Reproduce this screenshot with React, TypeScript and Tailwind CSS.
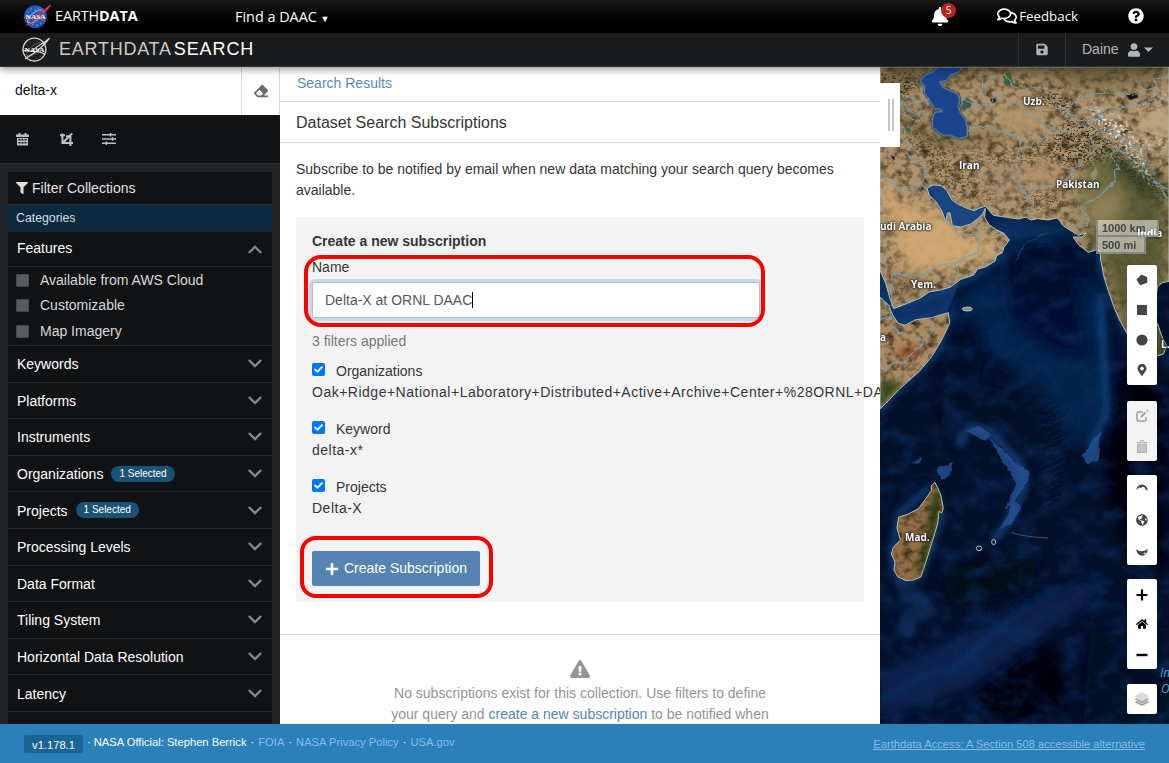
import React from 'react';
import {
  FaBell, FaRegComments, FaQuestionCircle, FaSave, FaUser, FaEraser,
  FaFilter, FaPlus, FaHome, FaExclamationTriangle, FaMapMarkerAlt, FaGlobeAmericas, FaCheck,
} from 'react-icons/fa';

const ARIAL = "font-['Liberation_Sans',Arial,sans-serif]";
const OPEN = "font-['Open_Sans',sans-serif]";

function Meatball({ mono }: { mono?: boolean }) {
  const line = mono ? '#e4e4e4' : '#e5343d';
  return (
    <svg width="28" height="26" viewBox="0 0 28 26">
      <circle cx="12.4" cy="12.6" r="11.4" fill={mono ? '#1b1c1e' : '#1d59b5'} stroke={mono ? '#d8d8d8' : 'none'} strokeWidth="1.3" />
      {[[8, 5], [15, 4], [18, 19], [6, 18], [10, 20], [5, 8], [20, 16], [12, 6], [14, 21]].map(([x, y]) => (
        <circle key={`${x}-${y}`} cx={x} cy={y} r=".5" fill={mono ? '#777' : '#fff'} />
      ))}
      <ellipse cx="12.4" cy="12.5" rx="9.6" ry="3.9" transform="rotate(-38 12.4 12.5)" fill="none" stroke={mono ? '#77787a' : '#dbe5f4'} strokeWidth=".65" />
      <path d="M3 21.8C10 17.7 20 12 27.5 1.1C20 8 14 8.5 10.2 14.4M.6 13.3C6 14.5 17 13.2 22.7 17.2" fill="none" stroke={line} strokeWidth="1.15" />
      <text x="2.6" y="15.2" textLength="20" lengthAdjust="spacingAndGlyphs" fill="#fff" fontSize="7" fontWeight="bold" fontFamily="Liberation Serif, serif">NASA</text>
    </svg>
  );
}

function Chevron({ up }: { up?: boolean }) {
  return (
    <svg width="14" height="9" viewBox="0 0 14 9" fill="none" stroke="#858687" strokeWidth="2.3" strokeLinecap="round" strokeLinejoin="miter">
      <path d={up ? 'M1.5 7.3L7 1.8L12.5 7.3' : 'M1.5 1.6L7 7.1L12.5 1.6'} />
    </svg>
  );
}

const facets: { name: string; selected?: boolean }[] = [
  { name: 'Keywords' }, { name: 'Platforms' }, { name: 'Instruments' },
  { name: 'Organizations', selected: true }, { name: 'Projects', selected: true },
  { name: 'Processing Levels' }, { name: 'Data Format' }, { name: 'Tiling System' },
  { name: 'Horizontal Data Resolution' }, { name: 'Latency' },
];

function Header() {
  return (
    <header className="relative z-20 shrink-0 shadow-[0_2px_8px_rgba(0,0,0,0.45)]">
      <div className={`flex h-[33px] items-center bg-gradient-to-b from-[#1a1a1a] to-black text-white ${OPEN}`}>
        <div className="flex w-[235px] items-center pl-[23px]">
          <Meatball />
          <span className="-mt-px ml-1 text-[14.4px] leading-[20px] tracking-[-0.1px]">EARTH<b>DATA</b></span>
        </div>
        <span className="text-[14.4px]">Find a DAAC <span className="text-[9px]">▼</span></span>
        <div className="ml-auto flex items-center pr-[25px]">
          <div className="relative mr-[48px] h-[20px] w-[18px]">
            <FaBell className="h-[19px] w-[18px]" />
            <span className="absolute -top-[4px] left-[10px] flex h-[15px] w-[15px] items-center justify-center rounded-full bg-[#b9241c] text-[10px]">5</span>
          </div>
          <FaRegComments className="-mt-[2px] h-[18px] w-[20px]" />
          <span className="ml-[2px] mr-[50px] text-[13.3px]">Feedback</span>
          <FaQuestionCircle className="-mt-[2px] h-4 w-4" />
        </div>
      </div>
      <div className="flex h-[34px] items-center border-b border-[#2f3032] bg-[#1a1b1d]">
        <div className="flex items-center pl-[22px] text-[18px] leading-none">
          <Meatball mono />
          <span className="-mt-[2px] ml-[9px] tracking-[0.75px] text-[#c9caca]">EARTHDATA</span>
          <span className="-mt-[2px] ml-[2px] tracking-[0.9px] text-white">SEARCH</span>
        </div>
        <div className="ml-auto flex h-full text-[#b4b5b6]">
          <div className="flex w-[47px] items-center justify-center border-l border-[#303133] pr-px"><FaSave className="h-[13px] w-[12px]" /></div>
          <div className="flex w-[104px] items-center border-l border-[#303133] pl-4 text-[14px]">
            Daine<FaUser className="ml-[9px] h-[14px] w-[12px]" />
            <svg className="ml-[4px]" width="9" height="5"><path d="M0 .5H9L4.5 5Z" fill="currentColor" /></svg>
          </div>
        </div>
      </div>
    </header>
  );
}

function Sidebar() {
  return (
    <aside className="flex w-[280px] shrink-0 flex-col overflow-hidden bg-[#222325]">
      <div className="flex h-12 shrink-0 bg-white text-[14px] text-[#111]">
        <div className="w-[241px] pl-[15px] pt-[13px] leading-[20px]">delta-x</div>
        <div className="flex flex-1 items-center justify-center border-x border-[#d8d9da] text-[#6b6c6e]"><FaEraser className="h-[14px] w-[14px]" /></div>
      </div>
      <div className="flex h-[49px] shrink-0 items-center border-b border-[#303133] bg-[#111214] pl-4 text-[#bfc0c1]">
        <svg width="13" height="13" viewBox="0 0 13 13"><path fill="currentColor" fillRule="evenodd" d="M2.5 0h2v1.5h4V0h2v1.5H13V4H0V1.5h2.5zM1 5h11v7.5H1zM2.5 6v1.6h2V6zm3 0v1.6h2V6zm3 0v1.6h2V6zM2.5 9v1.6h2V9zm3 0v1.6h2V9zm3 0v1.6h2V9z" /></svg>
        <svg className="ml-[31px]" width="13" height="13" viewBox="0 0 13 13" fill="none" stroke="currentColor" strokeWidth="2"><path d="M0 2.2h5M2.4 .5v9.5H13M10.4 13V3.2H6M3 9.5L12.3 .4" /></svg>
        <svg className="ml-[29px]" width="14" height="12" viewBox="0 0 14 12" stroke="currentColor" strokeWidth="1.4"><path d="M0 1.7h14M0 6h14M0 10.3h14M8.5 0v3.4M10.5 4.3v3.4M4.3 8.6V12" /></svg>
      </div>
      <div className="mx-2 mt-2 flex flex-col bg-[#111214]">
        <div className="flex h-[33px] items-center gap-1 border-b border-[#303133] pl-2 text-[14px] text-[#e1e1e1]">
          <FaFilter className="h-3 w-3" />Filter Collections
        </div>
        <div className="flex h-[27px] items-center border-b border-[#222426] bg-[#0b2a3f] pl-2 text-[12.3px] text-[#d9dde0]">Categories</div>
        <div className="flex h-[35px] items-center justify-between border-b border-[#242527] pl-[9px] pr-[10px] text-[14px] text-white"><span className="-mt-px">Features</span><Chevron up /></div>
        <div className="h-[79px] border-b border-[#242527] pl-2 pt-[1px] text-[14px] text-[#d8d9d9]">
          {['Available from AWS Cloud', 'Customizable', 'Map Imagery'].map((t) => (
            <div key={t} className="flex h-[25.3px] items-center"><span className="mr-[11px] h-[13px] w-[13px] rounded-[1px] border border-[#48494a] bg-[#5a5b5c]" />{t}</div>
          ))}
        </div>
        {facets.map((f) => (
          <div key={f.name} className="flex h-[36.6px] items-center border-b border-[#242527] pl-[9px] pr-[10px] text-[14px] text-white">
            <span className="mt-px leading-[20px]">{f.name}</span>
            {f.selected && <span className="ml-2 flex h-4 items-center rounded-full bg-[#1b5378] px-2 pb-px text-[10px]">1 Selected</span>}
            <span className="ml-auto"><Chevron /></span>
          </div>
        ))}
        <div className="h-10" />
      </div>
    </aside>
  );
}

function FilterItem({ title, value, h }: { title: string; value: string; h: string }) {
  return (
    <div className={h}>
      <div className="flex h-[21px] items-center">
        <span className="-mt-[5px] mr-[11px] flex h-[13px] w-[13px] items-center justify-center rounded-[2px] bg-[#0075ff]"><FaCheck className="h-[9px] w-[9px] text-white" /></span>{title}
      </div>
      <div className="whitespace-nowrap leading-[21px] tracking-[0.5px]">{value}</div>
    </div>
  );
}

function Panel() {
  return (
    <main className="relative flex w-[600px] shrink-0 flex-col overflow-hidden bg-white text-[14px] text-[#333537]">
      <div className="h-[35px] shrink-0 border-b border-[#dcdddd] pl-[17px] pt-[6px] leading-[20px] text-[#5889b8]">Search Results</div>
      <div className="flex h-[41px] shrink-0 items-center border-b border-[#dcdddd] pl-4 pt-[2px] text-[16px]">Dataset Search Subscriptions</div>
      <p className="h-[74px] shrink-0 px-4 pt-[16px] leading-[21px]">Subscribe to be notified by email when new data matching your search query becomes available.</p>
      <section className="mx-4 h-[385px] shrink-0 rounded-[2px] bg-[#f3f3f3] px-4 pt-[14px]">
        <div className="relative">
          <h2 className="font-bold leading-[21px]">Create a new subscription</h2>
          <div className="mt-[5px] h-[20px] leading-[20px]">Name</div>
          <div className="mt-[5px] flex h-[36px] w-[448px] items-center rounded-[3px] border border-[#a5bfd7] bg-white pl-3 text-[#55585c] shadow-[0_0_0_3px_#cbd6e1]">
            Delta-X at ORNL DAAC<span className="h-4 w-px bg-black" />
          </div>
          <div className="absolute -left-2 top-[24px] h-[72px] w-[461px] rounded-[17px] border-4 border-[#fb0000]" />
        </div>
        <div className="mb-[9px] mt-[13px] leading-[21px] text-[#777]">3 filters applied</div>
        <FilterItem h="h-[58px]" title="Organizations" value="Oak+Ridge+National+Laboratory+Distributed+Active+Archive+Center+%28ORNL+DAAC%29" />
        <FilterItem h="h-[58px]" title="Keyword" value="delta-x*" />
        <FilterItem h="h-[58px]" title="Projects" value="Delta-X" />
        <div className="relative mt-[16px] w-[168px]">
          <button className="flex h-[35px] w-[168px] items-center rounded-[2px] bg-[#5584b3] pl-[13px] text-white"><FaPlus className="mr-[5px] mt-px h-[14px] w-[14px]" />Create Subscription</button>
          <div className="absolute -left-3 -top-[15px] h-[62px] w-[193px] rounded-[16px] border-4 border-[#fb0000]" />
        </div>
      </section>
      <div className="mt-8 flex flex-col items-center border-t border-[#dcdddd] pt-[25px] text-center leading-[21px] text-[#939495]">
        <FaExclamationTriangle className="h-[18px] w-5" />
        <p className="mt-[5px] w-[390px]">No subscriptions exist for this collection. Use filters to define<br />your query and <span className="text-[#5584b5]">create a new subscription</span> to be notified when</p>
      </div>
    </main>
  );
}

const ASIA = 'M30 21H897V664L877 668L862 680L855 740L835 800L820 855L795 862L780 840L770 818L748 779L731 739L715 692L702 650L692 600L690 573L677 570L655 577L627 556L609 531L636 531L648 519L625 526L604 513L578 496L570 483L560 474L535 480L502 476L484 480L468 471L445 477L410 472L370 466L354 448L347 438L327 445L313 452L290 445L263 432L244 418L230 391L213 377L190 375L171 384L178 405L198 425L217 455L227 487L232 459L240 458L247 497L272 501L302 492L321 478L338 462L346 445L344 472L357 494L379 509L402 520L418 540L402 562L397 578L380 587L375 603L348 620L322 628L311 645L272 658L242 681L212 690L178 696L151 714L112 730L71 746L62 722L47 670L30 631Z';
const AFRICA = 'M30 712L56 735L68 765L84 789L105 796L137 779L185 773L235 758L239 790L214 842L185 890L148 934L112 966L85 990L55 1022L30 1047Z';
const CASPIAN = 'M149 64L165 45L187 36L205 21H278L267 36L241 46L229 63L210 65L217 81L238 91L265 102L269 122L265 138L271 159L286 177L292 202L291 230L266 236L240 226L218 226L188 203L186 183L191 161L202 155L217 154L211 148L194 147L181 125L162 98L164 77Z';
const MADAGASCAR = 'M194 1267L203 1282L213 1308L220 1345L215 1359L207 1354L203 1391L187 1444L168 1505L152 1551L130 1560L108 1562L83 1550L72 1530L75 1506L64 1482L70 1462L91 1440L81 1404L86 1371L113 1363L145 1346L166 1318L184 1292L184 1278Z';
const BORDERS = [
  'M30 345L95 390L137 391L155 368L173 386', 'M90 190L106 210L100 235L126 255L112 281L131 303L161 319L165 350L156 370L171 384',
  'M90 101L125 116L143 125L178 116M90 125L118 149L101 157L135 185L155 177L145 160L168 151M92 110L110 140L137 170',
  'M292 218L318 200L358 199L391 211L437 228L451 248L449 263L442 286L442 321L451 350L445 381L491 430L489 445L461 459',
  'M449 262L480 263L498 239L529 234L532 220L559 212L603 217L627 198L658 205L668 219L663 240L680 263L663 282L640 280L632 316L611 325L603 353L551 376L484 386L445 381',
  'M338 131V57L402 42L426 77L465 84L515 85L540 103L560 145L594 151L588 169L620 165L620 180L655 184L675 175',
  'M272 134L282 119L321 138L339 133L363 135L376 108L400 109L426 130L449 128L465 154L500 180L540 200L570 212',
  'M594 151L620 120L672 102L721 98L748 105L801 102L842 83L866 88L852 60L897 47M621 145L655 156L693 142L700 150L680 180L710 160L735 150L770 140L845 123L897 110',
  'M668 219L700 212L740 221L760 240L778 240L790 253L802 265L790 276L758 278L744 267L721 281L748 326L733 334L736 364L694 402L672 420L626 436L638 456L655 466L652 495L631 502L590 492',
  'M790 253L829 297L816 324L855 367L897 390M855 367L858 380L875 385L884 408L897 416', 'M245 497L267 522L320 526L328 480M320 526L327 545L322 580L292 594L253 609L272 657M253 609L191 618L152 651L124 643L65 643V738',
  'M60 748L61 778H30M60 792L85 816L163 844L188 814V776M163 844L103 906L70 910L30 933M30 713L68 765',
];
const SHELF = [
  'M690 575Q710 675 771 818', 'M75 740Q210 696 310 650L400 580', 'M90 790L237 765L200 880L80 990L30 1050', 'M184 1278L90 1360L65 1480L90 1570L150 1550L220 1350',
];

function EarthMap() {
  return (
    <svg className="block" width="289" height="657" viewBox="30 21 867 1971" preserveAspectRatio="none">
      <defs>
        <filter id="terrain" filterUnits="userSpaceOnUse" x="30" y="21" width="867" height="1971" colorInterpolationFilters="sRGB">
          <feTurbulence type="fractalNoise" baseFrequency=".04 .045" numOctaves="5" seed="8" />
          <feColorMatrix values="0 0 0 0 .15  0 0 0 0 .11  0 0 0 0 .04  0 1.9 0 0 -.82" result="n" />
          <feComposite in="n" in2="SourceGraphic" operator="in" result="m" />
          <feMerge><feMergeNode in="SourceGraphic" /><feMergeNode in="m" /></feMerge>
        </filter>
        <filter id="rough" filterUnits="userSpaceOnUse" x="30" y="21" width="867" height="1971" colorInterpolationFilters="sRGB">
          <feGaussianBlur in="SourceGraphic" stdDeviation="13" result="b" />
          <feTurbulence type="fractalNoise" baseFrequency=".12 .17" numOctaves="3" seed="4" />
          <feColorMatrix values="0 0 0 0 0  0 0 0 0 0  0 0 0 0 0  0 7 0 0 -3.6" result="n" />
          <feComposite in="b" in2="n" operator="in" />
        </filter>
        <filter id="sea" filterUnits="userSpaceOnUse" x="30" y="21" width="867" height="1971" colorInterpolationFilters="sRGB">
          <feTurbulence type="fractalNoise" baseFrequency=".014 .02" numOctaves="6" seed="12" />
          <feColorMatrix values="0 0 0 0 .05  0 0 0 0 .18  0 0 0 0 .38  0 2.4 0 0 -1.02" />
        </filter>
        <filter id="soft" x="-60%" y="-60%" width="220%" height="220%"><feGaussianBlur stdDeviation="22" /></filter>
        <filter id="soft2" x="-40%" y="-40%" width="180%" height="180%"><feGaussianBlur stdDeviation="9" /></filter>
        <filter id="jag" x="-10%" y="-10%" width="120%" height="120%"><feTurbulence type="fractalNoise" baseFrequency=".04" numOctaves="3" /><feDisplacementMap in="SourceGraphic" scale="14" xChannelSelector="R" yChannelSelector="G" /></filter>
        <clipPath id="landClip"><path d={ASIA} /></clipPath>
        <linearGradient id="ocean" x1="0" y1="0" x2="0" y2="1"><stop offset="0" stopColor="#061c45" /><stop offset=".35" stopColor="#031029" /><stop offset="1" stopColor="#030f29" /></linearGradient>
      </defs>
      <rect x="30" y="21" width="867" height="1971" fill="url(#ocean)" />
      <g filter="url(#soft)">
        <path d="M360 460L600 490L700 700L720 1060L630 1170L520 1000L330 850L230 750L400 610Z" fill="#06204c" />
        <ellipse cx="530" cy="640" rx="130" ry="135" fill="#020b29" />
        <ellipse cx="275" cy="875" rx="65" ry="110" fill="#020925" />
        <path d="M400 700L640 760L660 900L560 880L420 780Z" fill="#031132" />
        <path d="M230 960L420 990L400 1070L210 1110Z" fill="#020a20" />
        <path d="M745 900L897 980V1540L790 1510L690 1260Z" fill="#01040f" />
        <path d="M210 1530L500 1480L490 1570L250 1640Z" fill="#010817" />
        <path d="M310 1780L520 1750L650 1850L530 1992L340 1992Z" fill="#01050f" />
        <path d="M660 1720L897 1700V1992H640Z" fill="#020b22" />
        <path d="M30 1840L640 1570L700 1590L560 1690L300 1880L30 1970Z" fill="#09234f" />
        <path d="M330 480L620 500L680 610L640 520L380 540Z" fill="#103468" />
      </g>
      <rect x="30" y="21" width="867" height="1971" filter="url(#sea)" opacity=".6" />
      <g filter="url(#soft2)" fill="none" stroke="#154480">
        {SHELF.map((d) => <path key={d} d={d} strokeWidth="25" opacity=".7" />)}
        <path d="M692 700Q700 900 710 1060Q680 1120 660 1170" strokeWidth="24" opacity=".75" />
        <path d="M270 1160Q275 1120 300 1100Q360 1100 400 1160Q500 1250 440 1330Q420 1390 370 1440" strokeWidth="24" opacity=".8" />
        <path d="M30 1920L150 1850L260 1820L360 1730L500 1620L620 1570" strokeWidth="10" opacity=".5" />
        <path d="M90 1600L140 1610L170 1650L120 1670L100 1730" strokeWidth="50" opacity=".4" />
      </g>
      <g filter="url(#jag)" fill="#28569a" opacity=".75">
        <path d="M285 1110L330 1097L362 1125L350 1145L318 1125Z" /><path d="M355 1130L420 1190L480 1240L462 1284L430 1330L405 1350L438 1268L390 1190Z" /><path d="M425 1310L455 1340L425 1395L390 1408L415 1360Z" />
        <path d="M690 1110L685 1200L650 1210L635 1190Z" /><path d="M202 1225L248 1205L238 1247L216 1260Z" /><path d="M127 1205L158 1190L150 1210Z" />
      </g>
      <g fill="none" stroke="#153c72" strokeWidth="2" opacity=".5" filter="url(#jag)">
        {Array.from({ length: 22 }, (_, i) => <path key={i} d={`M${245 + i * 10} ${1835 - i * 8}L${270 + i * 10} ${1700 - i * 5}`} />)}
        {Array.from({ length: 22 }, (_, i) => <path key={i + 30} d={`M${510 + (i % 4) * 8} ${1040 + i * 15}L${560 + (i % 5) * 9} ${1010 + i * 15}`} />)}
      </g>
      <path d="M425 1418Q470 1432 535 1434" fill="none" stroke="#4f7298" strokeWidth="3" opacity=".7" />
      <path d="M435 605L465 550L540 515" fill="none" stroke="#2d5584" strokeWidth="5" opacity=".4" filter="url(#jag)" />

      <g filter="url(#terrain)">
        <path d={ASIA} fill="#ad926d" /><path d={AFRICA} fill="#a98a62" />
        <path d={MADAGASCAR} fill="#936d47" /><path d="M862 790L878 835L890 858L880 882L862 888Z" fill="#4e5630" />
      </g>
      <g clipPath="url(#landClip)">
        <g filter="url(#soft)">
          <path d="M30 0H897V60L650 85L520 50L310 45L270 70L150 60L30 120Z" fill="#5a5030" opacity=".7" />
          <path d="M90 430L225 460L290 530L320 590L250 620L110 640L30 400V320Z" fill="#d2a974" opacity=".92" />
          <path d="M270 600L360 590L400 550L320 530Z" fill="#d5b17a" /><path d="M345 150L480 130L540 220L440 215Z" fill="#b4956a" />
          <path d="M645 290L830 360L897 440V665L770 850L695 600L640 540L690 430Z" fill="#50532e" opacity=".85" />
          <path d="M640 405L760 380L750 480L660 500Z" fill="#928158" /><path d="M650 270L735 310L725 400L600 480L620 400Z" fill="#707044" opacity=".7" />
          <path d="M690 260L870 350L897 410L820 390L720 310Z" fill="#25371a" />
          <path d="M450 320L560 320L540 385L450 370Z" fill="#b59268" />
          <path d="M360 330L410 320L430 400L370 370Z" fill="#9d8a7a" opacity=".7" />
          <path d="M110 130L180 220L310 225L420 210L390 240L180 260L80 170Z" fill="#4b4121" opacity=".6" />
          <path d="M60 645L180 645L100 725Z" fill="#80694a" opacity=".8" />
        </g>
        <g filter="url(#rough)">
          <path d="M100 190L250 270L430 280L630 190L680 230L570 290L440 320L240 290L390 430L240 410L110 250Z" fill="#302916" opacity=".55" />
          <path d="M580 180L680 180L760 240L870 350L840 380L720 290L610 330L540 290Z" fill="#241c12" opacity=".8" />
          <path d="M450 400L590 390L560 460L470 460ZM60 650L130 660L90 720ZM330 460L410 520L390 550L340 490Z" fill="#3b3020" opacity=".6" />
          <path d="M520 80L630 130L590 170L500 120ZM30 40H150L120 120L30 100ZM715 280L820 350L897 390L890 420L820 390Z" fill="#26220f" opacity=".8" />
        </g>
        <g filter="url(#rough)" fill="#fff">
          <path d="M650 130L770 185L790 240L897 235V260L800 255L850 330L830 355L770 280L730 230L670 195Z" />
          <path d="M685 205L780 225L850 350L875 375L840 375L740 255Z" /><path d="M790 140L897 95V115L805 150Z" opacity=".7" />
        </g>
        <path d="M810 190Q835 150 897 135V235Q845 225 805 204Z" fill="#bea680" opacity=".8" />
        <path d="M662 337L678 322L684 338L675 358L663 360Z" fill="#a39a7c" opacity=".65" />
        <path d="M400 45L420 35L430 70L405 75ZM710 40L740 27L740 43ZM102 205L120 205L120 225Z" fill="#286139" opacity=".85" />
      </g>
      <g filter="url(#soft2)"><path d="M80 870L160 850L110 905Z" fill="#84411f" opacity=".8" /><path d="M30 960L100 970L30 1040Z" fill="#35481c" /><path d="M195 1290L213 1300L210 1350L180 1460L150 1550L140 1535L165 1450L180 1350Z" fill="#253b11" /></g>
      <path d={CASPIAN} fill="#1b448d" stroke="#173045" strokeWidth="7" /><path d={CASPIAN} fill="#1b448d" stroke="#96b6b6" strokeWidth="2.5" />
      <path d="M270 130L290 112L309 128L300 144L275 147Z" fill="#3c5c57" />
      <path d="M360 119L374 112L379 124L368 130ZM765 103L800 100L805 112L780 120ZM62 288L75 290L72 301Z" fill="#12151a" />
      <path d="M171 384L190 375L213 377L230 391L244 418L263 432L290 445L313 452L347 438L338 462L321 478L302 492L272 501L247 497L240 458L232 459L227 487L217 455L198 425Z" fill="#1a4580" />
      <path d="M30 631L47 670L62 722L71 746L242 681L272 658L230 760L137 779L105 796L84 789L68 765L56 735L30 712Z" fill="#12407f" opacity=".65" />
      <g fill="none" stroke="#a9c4bb" strokeWidth="3" strokeLinejoin="round">
        <path d={ASIA} /><path d={AFRICA} /><path d={MADAGASCAR} /><path d="M862 790L878 835L890 858L880 882L862 888" />
        <ellipse cx="292" cy="747" rx="15" ry="6" fill="#938b78" /><ellipse cx="327" cy="1465" rx="8" ry="7" /><ellipse cx="371" cy="1446" rx="6" ry="8" />
      </g>
      <g fill="none" stroke="#7d9faa" strokeWidth="3.3" strokeLinejoin="round" filter="url(#jag)" opacity=".95">{BORDERS.map((d) => <path key={d} d={d} />)}</g>
    </svg>
  );
}

const labels = [
  { t: 'Uzb.', c: 'left-[143px] top-[27px]' }, { t: 'Iran', c: 'left-[79px] top-[91px]' },
  { t: 'Pakistan', c: 'left-[176px] top-[110px]' }, { t: 'udi Arabia', c: 'left-0 top-[152px]' },
  { t: 'Yem.', c: 'left-[31px] top-[210px]' }, { t: 'India', c: 'left-[257px] top-[159px]' },
  { t: 'a', c: 'left-0 top-[263px]' }, { t: 'L.', c: 'left-[281px] top-[270px]' }, { t: 'Mad.', c: 'left-[25px] top-[463px]' },
];

const SLOT = 'flex h-[30px] items-center justify-center';

function MapView() {
  return (
    <div className="relative flex-1 overflow-hidden">
      <EarthMap />
      {labels.map((l) => (
        <span key={l.t} className={`absolute whitespace-nowrap text-[10px] font-bold leading-[14px] text-white [text-shadow:0_0_2px_#222,0_0_2px_#222,0_0_3px_#222] ${OPEN} ${l.c}`}>{l.t}</span>
      ))}
      <span className={`absolute left-[280px] top-[597px] text-[12px] italic leading-[17px] text-[#4ca5cc] ${OPEN}`}>In</span>
      <span className={`absolute left-[281px] top-[613px] text-[12px] italic leading-[17px] text-[#4ca5cc] ${OPEN}`}>O</span>
      <div className="absolute left-0 top-4 flex h-16 w-5 items-center justify-center gap-[2px] bg-white pl-[2px]">
        <span className="h-8 w-[2px] bg-[#c5c5c5]" /><span className="h-8 w-[2px] bg-[#c5c5c5]" />
      </div>
      <div className="absolute left-[216px] top-[153px] flex flex-col items-start text-[11px] font-bold text-[#454545]">
        <div className="h-[17px] w-[63px] border-2 border-t-0 border-[#777]/70 bg-white/50 pl-[4px] leading-[16px]">1000 km</div>
        <div className="h-[17px] w-[50px] border-2 border-t-0 border-[#777]/70 bg-white/50 pl-[4px] leading-[16px]">500 mi</div>
      </div>
      <div className="absolute left-[247px] top-[198px] w-[30px] text-[#464646]">
        <div className="rounded-[2px] bg-white">
          <div className={SLOT}><svg width="12" height="12" viewBox="0 0 13 13"><path d="M5.8.5L12.1 3.3L12.3 9.4L4.4 12.1L.5 6Z" fill="currentColor" /></svg></div>
          <div className={SLOT}><span className="h-[10px] w-[10px] bg-[#464646]" /></div>
          <div className={SLOT}><svg width="12" height="12"><circle cx="6" cy="6" r="5.6" fill="currentColor" /></svg></div>
          <div className={SLOT}><FaMapMarkerAlt className="h-[12px] w-[10px]" /></div>
        </div>
        <div className="mt-4 rounded-[2px] bg-[#f3f3f3]">
          <div className={SLOT}><svg width="14" height="14" viewBox="0 0 14 14" fill="none" stroke="#a2a2a2" strokeWidth="1.6"><path d="M8 3H3.5Q2 3 2 4.5V10.5Q2 12 3.5 12H9.5Q11 12 11 10.5V8" /><path d="M6 8L10.5 3.5" strokeWidth="2.2" /><path d="M12 1.2L13 2.2" strokeWidth="2" /></svg></div>
          <div className={SLOT}><svg width="12" height="13" viewBox="0 0 12 13"><path d="M4 1.7V.7H8V1.7M.5 2.5H11.5" fill="none" stroke="#b5b5b5" /><path d="M1.5 4.2H10.5V12.5H1.5Z" fill="#c5c5c5" stroke="#b0b0b0" /></svg></div>
        </div>
        <div className="mt-[14px] rounded-[2px] bg-white">
          <div className={SLOT}><svg className="-mt-[5px]" width="12" height="7" viewBox="0 0 12 7"><path d="M.3 6Q1 .8 6 .4Q11 .8 11.8 6.5L9.3 5.2L8.8 3.4L6.5 2.8L4.3 4.2L3.4 3.2Z" fill="currentColor" /></svg></div>
          <div className={SLOT}><FaGlobeAmericas className="h-[12px] w-[12px]" /></div>
          <div className={SLOT}><svg className="mt-[5px]" width="12" height="7" viewBox="0 0 12 7"><path d="M.2 .2Q2.8 2.3 5.7 2.2Q9.5 2 11.8 .1Q11.3 6.2 6.2 6.7Q1 6.2 .2 .2Z" fill="currentColor" /><path d="M7.5 4.2l2-1v1.5l-1.2.5z" fill="#fff" /></svg></div>
        </div>
        <div className="mt-[14px] rounded-[2px] bg-white text-black">
          <div className={SLOT}><svg className="mt-[2px]" width="12" height="12"><path d="M6 .5V11.5M.5 6H11.5" stroke="currentColor" strokeWidth="2.2" /></svg></div>
          <div className={SLOT}><FaHome className="h-[12px] w-[12px]" /></div>
          <div className={SLOT}><svg className="mt-[2px]" width="12" height="4"><path d="M.5 2H11.5" stroke="currentColor" strokeWidth="2.4" /></svg></div>
        </div>
        <div className="mt-[15px] flex h-[30px] items-center justify-center rounded-[2px] bg-white">
          <svg width="18" height="16" viewBox="0 0 18 16" stroke="#fff" strokeWidth=".4"><path d="M1 11L9 7L17 11L9 15.3Z" fill="#a0a0a0" /><path d="M1 8.3L9 4.3L17 8.3L9 12.6Z" fill="#a8a8a8" /><path d="M1 5.3L9 1L17 5.3L9 9.8Z" fill="#dadada" /></svg>
        </div>
      </div>
    </div>
  );
}

export default function App() {
  return (
    <div className={`flex h-[763px] w-[1169px] flex-col overflow-hidden bg-white ${ARIAL}`}>
      <Header />
      <div className="flex h-[657px] shrink-0"><Sidebar /><Panel /><MapView /></div>
      <footer className="flex h-[39px] shrink-0 bg-[#2b80ba] pl-6 pr-6 text-[11.2px] text-white">
        <span className="mt-[11px] flex h-[18px] w-[59px] items-center justify-center rounded-[2px] bg-[#1b6494] pt-[2px]">v1.178.1</span>
        <div className="ml-[4px] flex gap-[4px] pt-[10px] leading-[16px]">
          <span>·</span><span className="-ml-px">NASA Official: Stephen Berrick</span><span>·</span><span className="text-[#86bde7]">FOIA</span><span>·</span><span className="text-[#86bde7]">NASA Privacy Policy</span><span>·</span><span className="text-[#86bde7]">USA.gov</span>
        </div>
        <span className="ml-auto pt-[12px] leading-[16px] text-[#86bde7] underline">Earthdata Access: A Section 508 accessible alternative</span>
      </footer>
    </div>
  );
}
